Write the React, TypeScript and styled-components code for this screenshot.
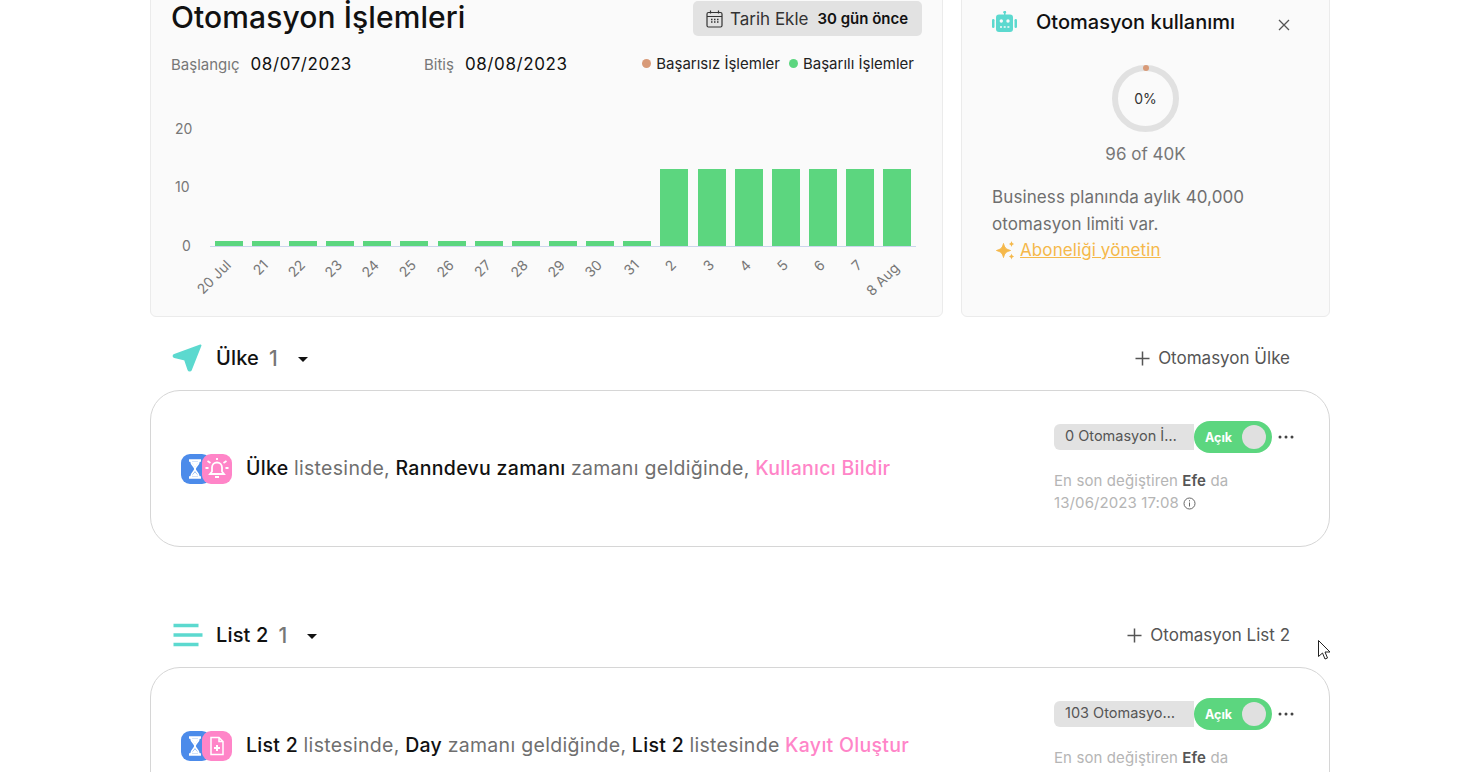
import styled, { createGlobalStyle } from "styled-components";
import { Fragment } from "react";

const GlobalStyle = createGlobalStyle`
  html, body {
    margin: 0;
    padding: 0;
    height: 772px;
    overflow: hidden;
    background: #fff;
    font-family: Inter, "Liberation Sans", sans-serif;
    color: #111;
  }
`;

const Page = styled.div`
  width: 1180px;
  margin: -20px auto 0 150px;
`;

const TopRow = styled.div`
  display: flex;
  gap: 18px;
  height: 337px;
`;

const Card = styled.section`
  box-sizing: border-box;
  background: #fafafa;
  border: 1px solid #ebebeb;
  border-radius: 6px;
`;

const ChartCard = styled(Card)`
  width: 793px;
  padding: 20px 20px 0 20px;
`;

const TitleRow = styled.div`
  display: flex;
  justify-content: space-between;
  align-items: center;
  height: 35px;
`;

const Title = styled.h1`
  margin: 0 0 2px;
  font-size: 30px;
  font-weight: 500;
  line-height: 33px;
  letter-spacing: 0.1px;
`;

const DateButton = styled.div`
  display: flex;
  align-items: center;
  gap: 7px;
  box-sizing: border-box;
  width: 229px;
  height: 35px;
  padding-left: 13px;
  background: #e2e2e2;
  border-radius: 5px;
  font-size: 17px;
  color: #333;
`;

const DateHint = styled.b`
  margin-left: 2px;
  font-size: 15px;
  font-weight: 600;
  color: #111;
`;

const FilterRow = styled.div`
  display: flex;
  align-items: center;
  margin-top: 18px;
  height: 20px;
`;

const DateField = styled.div<{ $width: number }>`
  display: flex;
  align-items: center;
  gap: 11px;
  width: ${(p) => p.$width}px;
`;

const DateLabel = styled.span`
  font-size: 15px;
  color: #777;
`;

const DateValue = styled.span`
  font-size: 17px;
  letter-spacing: 0.6px;
`;

const Legend = styled.div`
  display: flex;
  gap: 9px;
  margin: -2px 8px 0 auto;
  font-size: 15px;
  color: #222;
`;

const LegendItem = styled.span<{ $color: string }>`
  display: flex;
  align-items: center;
  gap: 5px;
  &::before {
    content: "";
    width: 9px;
    height: 9px;
    border-radius: 50%;
    background: ${(p) => p.$color};
  }
`;

const ChartSvg = styled.svg`
  display: block;
  margin: 26px 0 0 -20px;
`;

const AxisLabel = styled.text`
  font-family: Inter, "Liberation Sans", sans-serif;
  font-size: 14px;
  fill: #777;
`;

const UsageCard = styled(Card)`
  width: 369px;
  padding: 29px 30px 0 30px;
`;

const UsageHead = styled.div`
  display: flex;
  align-items: center;
  height: 24px;
`;

const UsageTitle = styled.h2`
  margin: 0 0 0 19px;
  font-size: 20px;
  font-weight: 500;
`;

const CloseButton = styled.span`
  display: flex;
  margin-left: auto;
  margin-right: 9px;
  margin-top: 6px;
`;

const Ring = styled.div`
  position: relative;
  box-sizing: border-box;
  width: 67px;
  height: 67px;
  margin: 31px auto 0;
  border: 6px solid #e1e1e1;
  border-radius: 50%;
  display: flex;
  align-items: center;
  justify-content: center;
  font-size: 14px;
  color: #333;
  &::after {
    content: "";
    position: absolute;
    top: -6px;
    left: 50%;
    margin-left: -3px;
    width: 6px;
    height: 6px;
    border-radius: 50%;
    background: #d89a78;
  }
`;

const RingCaption = styled.div`
  margin-top: 12px;
  text-align: center;
  font-size: 17px;
  color: #777;
`;

const UsageText = styled.p`
  margin: 20px 0 0;
  font-size: 17px;
  line-height: 26.5px;
  letter-spacing: 0.1px;
  color: #6f6f6f;
`;

const ManageLink = styled.a`
  display: flex;
  align-items: center;
  gap: 4px;
  padding-left: 4px;
  font-size: 17px;
  line-height: 26px;
  letter-spacing: 0.1px;
  color: #f5b84a;
  span {
    text-decoration: underline;
  }
`;

const Section = styled.div`
  margin-bottom: 47px;
`;

const SectionHead = styled.div`
  display: flex;
  align-items: center;
  box-sizing: border-box;
  height: 73px;
  padding: 9px 40px 0 22px;
`;

const SectionIcon = styled.span`
  display: flex;
  width: 44px;
`;

const SectionName = styled.h3`
  margin: 0;
  font-size: 20px;
  font-weight: 500;
  letter-spacing: 0.15px;
`;

const SectionCount = styled.span`
  margin-left: 10px;
  font-size: 21px;
  font-weight: 500;
  color: #777;
`;

const Caret = styled.span`
  width: 0;
  height: 0;
  margin: 2px 0 0 20px;
  border-left: 5px solid transparent;
  border-right: 5px solid transparent;
  border-top: 5px solid #111;
`;

const AddButton = styled.div`
  display: flex;
  align-items: center;
  gap: 8px;
  margin-left: auto;
  font-size: 17px;
  color: #555;
`;

const RuleCard = styled.article`
  box-sizing: border-box;
  display: flex;
  align-items: center;
  justify-content: space-between;
  height: 157px;
  padding: 0 35px 0 30px;
  background: #fff;
  border: 1px solid #d6d6d6;
  border-radius: 30px;
`;

const RuleMain = styled.div`
  display: flex;
  align-items: center;
`;

const IconPair = styled.span`
  display: flex;
  margin-right: 14px;
`;

const IconTile = styled.span<{ $color: string; $overlap?: boolean }>`
  display: flex;
  align-items: center;
  justify-content: center;
  width: 30px;
  height: 30px;
  border-radius: 9px;
  background: ${(p) => p.$color};
  margin-left: ${(p) => (p.$overlap ? "-9px" : "0")};
`;

const RuleText = styled.p`
  margin: 0 0 2px;
  font-size: 19.5px;
  font-weight: 500;
  letter-spacing: 0.3px;
  white-space: nowrap;
  color: #111;
`;

const Muted = styled.span`
  font-weight: 400;
  color: #6f6f6f;
`;

const Action = styled.span`
  color: #ff85c8;
`;

const RuleAside = styled.div`
  align-self: flex-start;
  width: 240px;
  padding-top: 30px;
`;

const StatusRow = styled.div`
  display: flex;
  align-items: center;
  height: 32px;
`;

const CountPill = styled.span`
  box-sizing: border-box;
  width: 140px;
  height: 26px;
  padding: 0 16px 0 11px;
  background: #e2e2e2;
  border-radius: 6px 0 0 6px;
  font-size: 14.5px;
  line-height: 24px;
  color: #555;
  white-space: nowrap;
  overflow: hidden;
  text-overflow: ellipsis;
`;

const Toggle = styled.span`
  box-sizing: border-box;
  display: flex;
  align-items: center;
  justify-content: space-between;
  width: 78px;
  height: 32px;
  padding: 0 6px 0 11px;
  background: #5cd67f;
  border-radius: 16px;
  font-size: 12.5px;
  font-weight: 700;
  color: #fff;
  &::after {
    content: "";
    width: 24px;
    height: 24px;
    border-radius: 50%;
    background: #e0e0e0;
  }
`;

const MoreDots = styled.span`
  display: flex;
  margin-left: 6px;
`;

const Meta = styled.p`
  margin: 17px 0 0;
  font-size: 15px;
  line-height: 22px;
  letter-spacing: 0.1px;
  color: #b5b5b5;
  b {
    font-weight: 600;
    color: #555;
  }
  svg {
    vertical-align: -2px;
  }
`;

const Pointer = styled.svg`
  position: absolute;
  left: 1317px;
  top: 639px;
`;

const bars = [
  "20 Jul", "21", "22", "23", "24", "25", "26", "27", "28", "29",
  "30", "31", "2", "3", "4", "5", "6", "7", "8 Aug",
];

function BarChart() {
  // viewBox is in page coordinates, it is simpler to read off the chart that way
  return (
    <ChartSvg width="791" height="210" viewBox="151 100 791 210">
      <AxisLabel x="175" y="134">20</AxisLabel>
      <AxisLabel x="175" y="192">10</AxisLabel>
      <AxisLabel x="182" y="251">0</AxisLabel>
      {bars.map((label, i) => {
        const x = Math.round(214.7 + i * 37.14);
        const top = i >= 12 ? 169 : 241;
        const labelX = x + 17;
        const labelY = label === "8 Aug" ? 269 : 266;
        return (
          <Fragment key={label}>
            <rect x={x} y={top} width="28" height={246 - top} fill="#5cd67f" />
            <AxisLabel
              x={labelX}
              y={labelY}
              textAnchor="end"
              transform={`rotate(-45 ${labelX} ${labelY})`}
            >
              {label}
            </AxisLabel>
          </Fragment>
        );
      })}
      <line x1="210" y1="246.5" x2="916" y2="246.5" stroke="#cbd6ec" />
    </ChartSvg>
  );
}

function CalendarIcon() {
  return (
    <svg width="17" height="18" viewBox="0 0 17 18" fill="none" stroke="#333" strokeWidth="1.2">
      <rect x="1" y="2.5" width="15" height="14.5" rx="1.5" />
      <path d="M1 6.5h15M4.5 0.5v3M12.5 0.5v3" />
      <path d="M5 9.5h1.5M8 9.5h1.5M11 9.5h1.5M5 12h1.5M8 12h1.5M11 12h1.5" strokeWidth="1.5" />
    </svg>
  );
}

function RobotIcon() {
  return (
    <svg width="25" height="22" viewBox="0 0 25 22" fill="#5cd9cf">
      <rect x="12" y="0" width="1.5" height="4" />
      <circle cx="12.7" cy="1.2" r="1.4" />
      <rect x="4" y="3.5" width="17" height="17.5" rx="3" />
      <rect x="0" y="8" width="2.5" height="9" rx="1.2" />
      <rect x="22.5" y="8" width="2.5" height="9" rx="1.2" />
      <circle cx="9.3" cy="10" r="1.7" fill="#fafafa" />
      <circle cx="16" cy="10" r="1.7" fill="#fafafa" />
      <path d="M8 16h2M11.7 16h2M15.4 16h2" stroke="#fafafa" strokeWidth="1.3" />
    </svg>
  );
}

function CloseIcon() {
  return (
    <svg width="12" height="12" viewBox="0 0 12 12" stroke="#555" strokeWidth="1.3">
      <path d="M1 1l10 10M11 1L1 11" />
    </svg>
  );
}

function SparkleIcon() {
  return (
    <svg width="20" height="19" viewBox="0 0 20 19" fill="#f5b84a">
      <path d="M7.5 2.500C8.500 6.500 9.500 8 14.500 9.500 9.500 11 8.500 12.500 7.500 16.500 6.500 12.500 5.500 11 .5 9.500 5.500 8 6.500 6.500 7.500 2.500z" stroke="#f5b84a" />
      <path d="M15.500 0c.4 1.700 1 2.400 2.600 3-1.600.6-2.200 1.300-2.600 3-.4-1.700-1-2.400-2.600-3 1.600-.6 2.200-1.300 2.600-3z" />
      <path d="M15.500 12.500c.4 1.700 1 2.400 2.600 3-1.600.6-2.200 1.300-2.600 3-.4-1.700-1-2.400-2.600-3 1.600-.6 2.200-1.300 2.600-3z" />
    </svg>
  );
}

function SendIcon() {
  return (
    <svg width="31" height="29" viewBox="0 0 31 29" fill="#5cd9cf" stroke="#5cd9cf" strokeWidth="2" strokeLinejoin="round">
      <path d="M28.500 1.500L19 25.500c-.6 1.400-2 1.400-2.600 0L13 15.500 2.500 13c-1.200-.3-1.200-1.500 0-2L28.500 1.500z" />
    </svg>
  );
}

function ListIcon() {
  return (
    <svg width="31" height="24" viewBox="0 0 31 24" stroke="#5cd9cf" strokeWidth="3.400">
      <path d="M1.500 2.500h25M1.500 12h29M1.500 21.500h25" />
    </svg>
  );
}

function PlusIcon() {
  return (
    <svg width="15" height="15" viewBox="0 0 15 15" stroke="#555" strokeWidth="1.500">
      <path d="M7.500 0.500v14M0.500 7.500h14" />
    </svg>
  );
}

function HourglassIcon() {
  return (
    <svg width="18" height="20" viewBox="0 0 18 20" fill="none" stroke="#fff" strokeWidth="2.400">
      <path d="M2 1.500h12M2 18.500h12" />
      <path d="M4 2c0 4 4 5.500 4 8s-4 4-4 8M12 2c0 4-4 5.500-4 8s4 4 4 8" strokeWidth="1.800" />
      <path d="M4.500 3h7l-3.500 5.500zM4.500 17l3.500-4 3.500 4z" fill="#fff" stroke="none" />
    </svg>
  );
}

function BellIcon() {
  return (
    <svg width="24" height="22" viewBox="0 0 24 22" fill="none" stroke="#fff" strokeWidth="1.800">
      <path d="M7 13.500V9.500a5 5 0 0 1 10 0V13.500l2 2.500H5zM10 19h4" />
      <path d="M2.500 3l3 2M21.500 3l-3 2M.5 10h3M23.500 10h-3M12 0v2" />
    </svg>
  );
}

function DocPlusIcon() {
  return (
    <svg width="16" height="20" viewBox="0 0 16 20" fill="none" stroke="#fff" strokeWidth="1.500">
      <path d="M2 1.500h8l4 4v13H2zM10 1.500v4h4" />
      <path d="M8 9v6M5 12h6" strokeWidth="2" />
    </svg>
  );
}

function DotsIcon() {
  return (
    <svg width="16" height="4" viewBox="0 0 16 4" fill="#444">
      <circle cx="2" cy="2" r="1.500" />
      <circle cx="8" cy="2" r="1.500" />
      <circle cx="14" cy="2" r="1.500" />
    </svg>
  );
}

function InfoIcon() {
  return (
    <svg width="13" height="13" viewBox="0 0 13 13" fill="none" stroke="#666">
      <circle cx="6.500" cy="6.500" r="5.500" />
      <path d="M6.500 5.500v4M6.500 3.200v1.200" />
    </svg>
  );
}

interface RuleProps {
  icon: React.ReactNode;
  count: string;
  children: React.ReactNode;
}

function Rule({ icon, count, children }: RuleProps) {
  return (
    <RuleCard>
      <RuleMain>
        <IconPair>
          <IconTile $color="#4c8bea">
            <HourglassIcon />
          </IconTile>
          <IconTile $color="#ff85c8" $overlap>
            {icon}
          </IconTile>
        </IconPair>
        <RuleText>{children}</RuleText>
      </RuleMain>
      <RuleAside>
        <StatusRow>
          <CountPill>{count}</CountPill>
          <Toggle>Açık</Toggle>
          <MoreDots>
            <DotsIcon />
          </MoreDots>
        </StatusRow>
        <Meta>
          En son değiştiren <b>Efe</b> da
          <br />
          13/06/2023 17:08 <InfoIcon />
        </Meta>
      </RuleAside>
    </RuleCard>
  );
}

export default function App() {
  return (
    <>
      <GlobalStyle />
      <Page>
        <TopRow>
          <ChartCard>
            <TitleRow>
              <Title>Otomasyon İşlemleri</Title>
              <DateButton>
                <CalendarIcon />
                Tarih Ekle
                <DateHint>30 gün önce</DateHint>
              </DateButton>
            </TitleRow>
            <FilterRow>
              <DateField $width={253}>
                <DateLabel>Başlangıç</DateLabel>
                <DateValue>08/07/2023</DateValue>
              </DateField>
              <DateField $width={200}>
                <DateLabel>Bitiş</DateLabel>
                <DateValue>08/08/2023</DateValue>
              </DateField>
              <Legend>
                <LegendItem $color="#d89a78">Başarısız İşlemler</LegendItem>
                <LegendItem $color="#5cd67f">Başarılı İşlemler</LegendItem>
              </Legend>
            </FilterRow>
            <BarChart />
          </ChartCard>
          <UsageCard>
            <UsageHead>
              <RobotIcon />
              <UsageTitle>Otomasyon kullanımı</UsageTitle>
              <CloseButton>
                <CloseIcon />
              </CloseButton>
            </UsageHead>
            <Ring>0%</Ring>
            <RingCaption>96 of 40K</RingCaption>
            <UsageText>
              Business planında aylık 40,000
              <br />
              otomasyon limiti var.
            </UsageText>
            <ManageLink>
              <SparkleIcon />
              <span>Aboneliği yönetin</span>
            </ManageLink>
          </UsageCard>
        </TopRow>

        <Section>
          <SectionHead>
            <SectionIcon>
              <SendIcon />
            </SectionIcon>
            <SectionName>Ülke</SectionName>
            <SectionCount>1</SectionCount>
            <Caret />
            <AddButton>
              <PlusIcon />
              Otomasyon Ülke
            </AddButton>
          </SectionHead>
          <Rule icon={<BellIcon />} count="0 Otomasyon İşlemi">
            Ülke <Muted>listesinde,</Muted> Ranndevu zamanı <Muted>zamanı geldiğinde,</Muted>{" "}
            <Action>Kullanıcı Bildir</Action>
          </Rule>
        </Section>

        <Section>
          <SectionHead>
            <SectionIcon>
              <ListIcon />
            </SectionIcon>
            <SectionName>List 2</SectionName>
            <SectionCount>1</SectionCount>
            <Caret />
            <AddButton>
              <PlusIcon />
              Otomasyon List 2
            </AddButton>
          </SectionHead>
          <Rule icon={<DocPlusIcon />} count="103 Otomasyon İşlemi">
            List 2 <Muted>listesinde,</Muted> Day <Muted>zamanı geldiğinde,</Muted> List 2{" "}
            <Muted>listesinde</Muted> <Action>Kayıt Oluştur</Action>
          </Rule>
        </Section>
      </Page>
      <Pointer width="14" height="22" viewBox="0 0 14 22" fill="#fff" stroke="#222">
        <path d="M1.500 1.500v16l4-3.500 2.500 6 2.500-1-2.500-6h5z" />
      </Pointer>
    </>
  );
}
